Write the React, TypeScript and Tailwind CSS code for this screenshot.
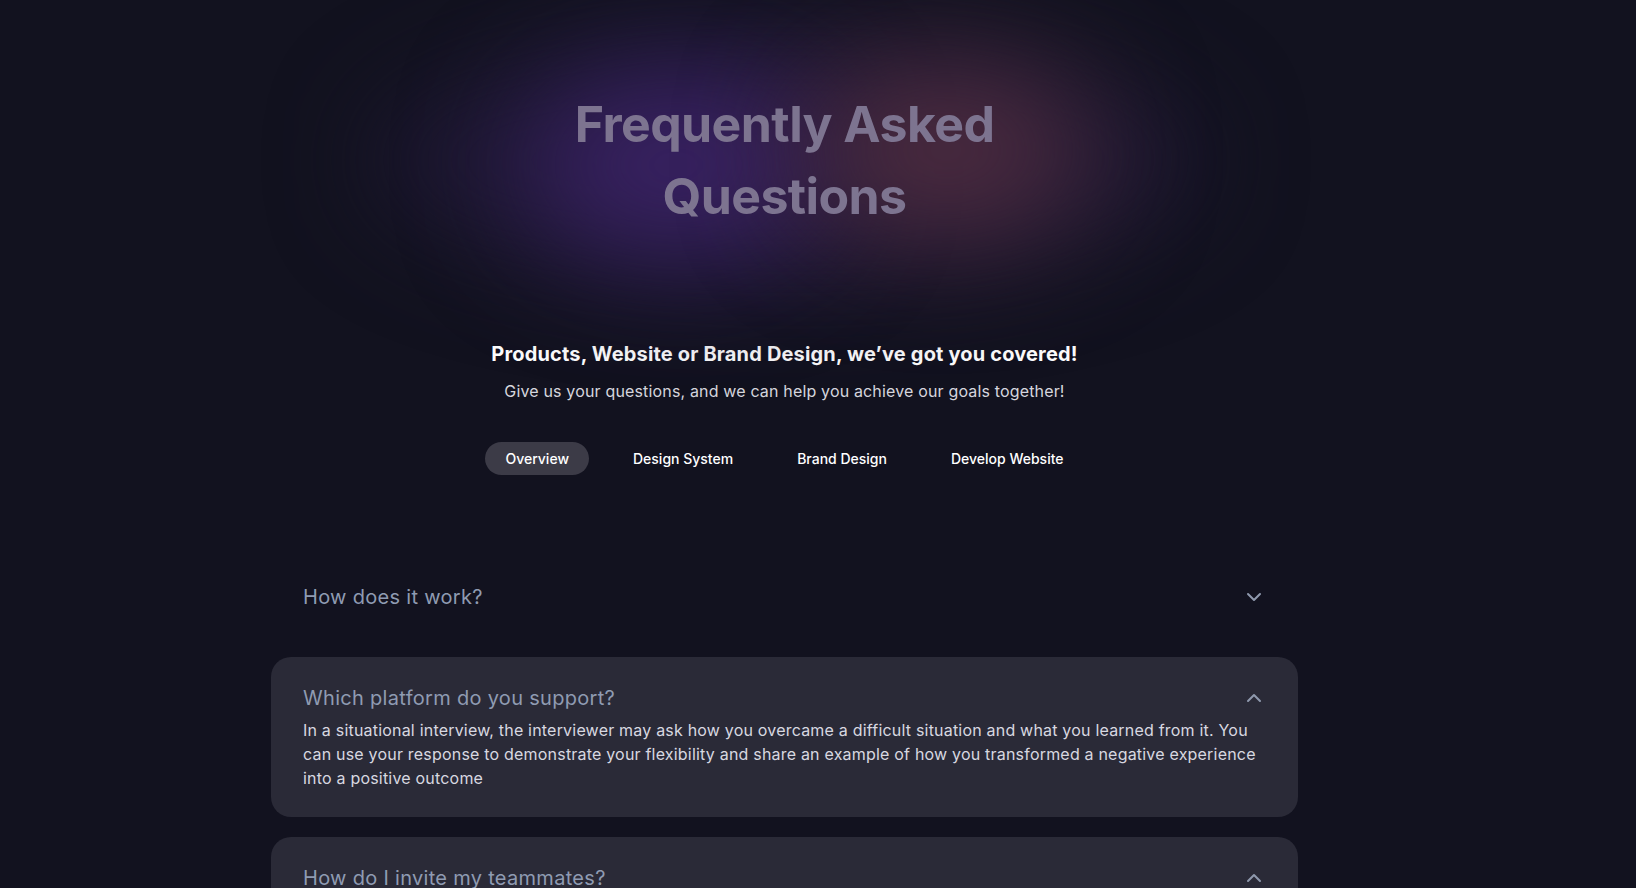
import { ChevronDown, ChevronUp } from "lucide-react";

const tabs = ["Overview", "Design System", "Brand Design", "Develop Website"];

const answer =
  "In a situational interview, the interviewer may ask how you overcame a difficult situation and what you learned from it. You can use your response to demonstrate your flexibility and share an example of how you transformed a negative experience into a positive outcome";

const faqs = [
  { q: "How does it work?", open: false },
  { q: "Which platform do you support?", open: true },
  { q: "How do I invite my teammates?", open: true },
];

export default function App() {
  return (
    <div
      className="min-h-screen bg-[#12121f] pr-[67px] pb-24 text-white overflow-hidden"
      style={{ fontFamily: "Inter, 'Noto Sans', sans-serif" }}
    >
      <div className="mx-auto w-[1027px] flex flex-col items-center">
        {/* Hero with glow */}
        <div className="relative w-full flex justify-center pt-[88px]">
          <div className="absolute left-[100px] top-[40px] w-[830px] h-[240px] rounded-[50%] bg-[#1d1731] blur-[50px]" />
          <div className="absolute left-[250px] top-[75px] w-[310px] h-[180px] rounded-[50%] bg-[#3a2265] blur-[60px]" />
          <div className="absolute left-[530px] top-[65px] w-[290px] h-[170px] rounded-[50%] bg-[#4e2c40] blur-[60px]" />
          <h1 className="relative text-center text-[50px] leading-[72px] font-bold tracking-[-0.012em] text-[#7d7490] w-[480px]">
            Frequently Asked Questions
          </h1>
        </div>

        <h2 className="mt-[108px] text-xl leading-7 font-bold tracking-[0.008em] text-white">
          Products, Website or Brand Design, we’ve got you covered!
        </h2>
        <p className="mt-[11px] text-base leading-6 tracking-[0.01em] text-[#d6d6de]">
          Give us your questions, and we can help you achieve our goals together!
        </p>

        <div className="mt-[39px] flex gap-6">
          {tabs.map((t, i) => (
            <button
              key={t}
              className={`h-[33px] px-5 rounded-full text-sm font-medium text-white ${
                i === 0 ? "bg-[#3c3b47]" : ""
              }`}
            >
              {t}
            </button>
          ))}
        </div>

        <div className="mt-[81px] w-full flex flex-col gap-5">
          {faqs.map((f) => (
            <div
              key={f.q}
              className={`rounded-[20px] px-8 pt-[25px] ${f.open ? "bg-[#2a2a37] pb-[27px]" : "pb-6"}`}
            >
              <div className="flex items-center justify-between">
                <h3 className="text-xl leading-8 tracking-[0.015em] text-[#8f9bb2]">{f.q}</h3>
                {f.open ? (
                  <ChevronUp size={24} className="text-[#8f99ad]" />
                ) : (
                  <ChevronDown size={24} className="text-[#8f99ad]" />
                )}
              </div>
              {f.open && (
                <p className="mt-1 text-base leading-6 tracking-[0.0125em] text-[#d8d8e0]">
                  {answer}
                </p>
              )}
            </div>
          ))}
        </div>
      </div>
    </div>
  );
}
